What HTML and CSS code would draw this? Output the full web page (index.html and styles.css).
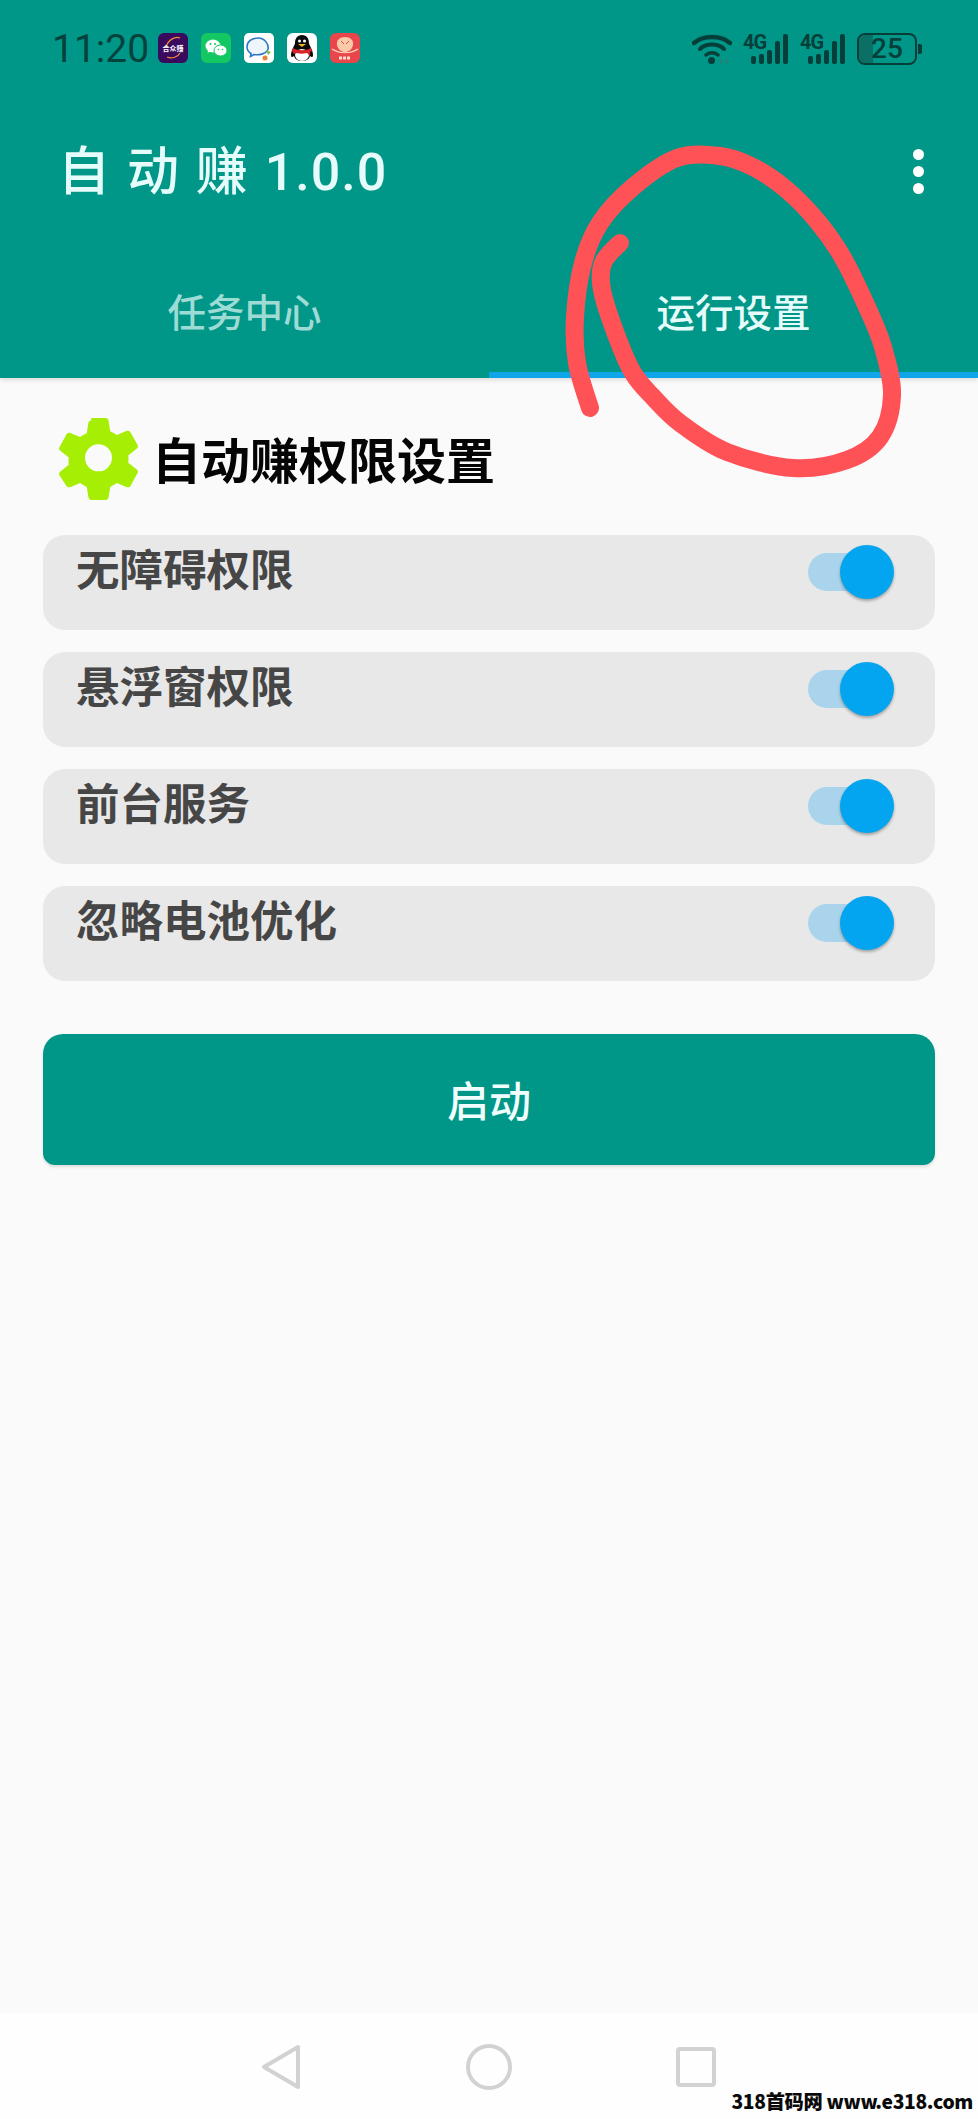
FILE: index.html
```html
<!DOCTYPE html>
<html lang="zh-CN">
<head>
<meta charset="utf-8">
<title>自动赚 1.0.0</title>
<link rel="stylesheet" href="styles.css">
</head>
<body>
<div class="phone">
  <header class="appbar">
    <div class="statusbar">
      <span class="clock">11:20</span>
      <div class="notifs">
        <svg class="notif" viewBox="0 0 30 30"><rect width="30" height="30" rx="6" fill="#3a0a5e"/><path d="M8 14C10 7 17 3 22 5" fill="none" stroke="#f08a3c" stroke-width="1.200"/><path d="M9 24C14 26 20 24 22 20" fill="none" stroke="#f08a3c" stroke-width="1.200"/><text class="notif-label" x="15" y="18" text-anchor="middle">合众赚</text></svg>
        <svg class="notif" viewBox="0 0 30 30"><rect width="30" height="30" rx="6" fill="#13c762"/><ellipse cx="12" cy="13" rx="7.500" ry="6.500" fill="#fff"/><path d="M7.500 17l-1 3 3.500-2z" fill="#fff"/><ellipse cx="19.500" cy="17.500" rx="6.500" ry="5.500" fill="#fff" stroke="#13c762"/><circle cx="9.500" cy="11" r="1" fill="#13c762"/><circle cx="14" cy="11" r="1" fill="#13c762"/><circle cx="17.500" cy="16.500" r=".8" fill="#13c762"/><circle cx="21.500" cy="16.500" r=".8" fill="#13c762"/></svg>
        <svg class="notif" viewBox="0 0 30 30"><rect width="30" height="30" rx="5" fill="#fff"/><path d="M14 5C7 5 3 9 3 14c0 3 1.500 5 4 6.500l-.5 3 3.500-2c6 1 12-1 14-5 1-5-3-11.500-10-11.500z" fill="#eef6fb" stroke="#2b78c2" stroke-width="1.600"/><path d="M22 17l5 2-3 3z" fill="#7cc24a"/><circle cx="21" cy="25" r="2.500" fill="#e8843a"/></svg>
        <svg class="notif" viewBox="0 0 30 30"><rect width="30" height="30" rx="6" fill="#fff"/><path d="M15 2c-5 0-7 4-7 8 0 2-4 7-4 12 0 2 1 3 3 1 1 4 5 5 8 5s7-1 8-5c2 2 3 1 3-1 0-5-4-10-4-12 0-4-2-8-7-8z" fill="#0b0b0b"/><ellipse cx="15" cy="22" rx="7" ry="6" fill="#fff"/><path d="M6 15c5 3 13 3 18 0l1 3-2 1 0 4-3-3c-4 1-7 1-10 0l-3 1-2-3z" fill="#d9232b"/><path d="M11 11h8l-4 3z" fill="#f5b31c"/><circle cx="12.500" cy="8" r="1.500" fill="#fff"/><circle cx="17.500" cy="8" r="1.500" fill="#fff"/></svg>
        <svg class="notif" viewBox="0 0 30 30"><rect width="30" height="30" rx="6" fill="#e9464c"/><path d="M15 4c5 0 9 3 8 8-1 5-5 7-8 7s-7-2-8-7c-1-5 3-8 8-8z" fill="#f9c9a8"/><path d="M11 8l3 3M19 8l-3 3" stroke="#e9464c" fill="none"/><path d="M2 16c8 5 18 5 26 0" fill="none" stroke="#f9d9c4" stroke-width="1.200"/><path d="M9 25h12" stroke="#fbdccb" stroke-width="3" stroke-dasharray="3 1"/></svg>
      </div>
      <div class="indicators">
        <svg class="wifi" viewBox="0 0 40 30"><g fill="none" stroke="#063f3a" stroke-linecap="round"><path d="M2 9C11 1 29 1 38 9" stroke-width="4.500"/><path d="M8 15C14 9 26 9 32 15" stroke-width="4"/><path d="M14 21c3-3 9-3 12 0" stroke-width="3.500"/></g><circle cx="19.500" cy="26.500" r="3.500" fill="#063f3a"/><path d="M30 25l-3 2.500 3 2.500zM34 25l3 2.500-3 2.500z" fill="#2d7f75"/></svg>
        <div class="cell">
          <span class="gen">4G</span>
          <i class="bar b1"></i><i class="bar b2"></i><i class="bar b3"></i><i class="bar b4"></i><i class="bar b5"></i>
        </div>
        <div class="cell">
          <span class="gen">4G</span>
          <i class="bar b1"></i><i class="bar b2"></i><i class="bar b3"></i><i class="bar b4"></i><i class="bar b5"></i>
        </div>
        <div class="battery"><span class="level"></span><span class="percent">25</span></div>
        <i class="battery-nub"></i>
      </div>
    </div>
    <div class="titlebar">
      <h1 class="apptitle">自 动 赚 1.0.0</h1>
      <div class="overflow"><i></i><i></i><i></i></div>
    </div>
    <nav class="tabs">
      <div class="tab">任务中心</div>
      <div class="tab tab-active">运行设置</div>
    </nav>
  </header>

  <main class="content">
    <div class="heading">
      <svg class="gear" viewBox="0 0 24 24"><path fill-rule="evenodd" d="M9.900 .6h4.200c.4 0 .7.300.8.700l.5 3.100c.7.300 1.300.7 1.900 1.100l2.900-1.200c.4-.1.800 0 1 .3l2.100 3.800c.2.300.1.800-.2 1l-2.500 2c.1.700.1 1.400 0 2.100l2.500 2c.3.200.4.700.2 1l-2.100 3.800c-.2.300-.6.400-1 .3l-2.900-1.200c-.6.400-1.200.8-1.900 1.100l-.5 3.100c-.1.400-.4.700-.8.700H9.900c-.4 0-.7-.3-.8-.7l-.5-3.100c-.7-.3-1.300-.7-1.900-1.100l-2.900 1.200c-.4.100-.8 0-1-.3L.7 17.100c-.2-.3-.1-.8.200-1l2.500-2c-.1-.7-.1-1.400 0-2.100l-2.500-2c-.3-.2-.4-.7-.2-1l2.100-3.800c.2-.3.600-.4 1-.3l2.900 1.200c.6-.4 1.200-.8 1.900-1.100l.5-3.100c.1-.4.400-.7.800-.7zM12 8.200a3.900 3.900 0 1 0 0 7.800 3.900 3.900 0 0 0 0-7.800z"/></svg>
      <h2 class="heading-text">自动赚权限设置</h2>
    </div>
    <ul class="perms">
      <li class="perm"><span class="perm-name">无障碍权限</span><span class="switch"><i class="thumb"></i></span></li>
      <li class="perm"><span class="perm-name">悬浮窗权限</span><span class="switch"><i class="thumb"></i></span></li>
      <li class="perm"><span class="perm-name">前台服务</span><span class="switch"><i class="thumb"></i></span></li>
      <li class="perm"><span class="perm-name">忽略电池优化</span><span class="switch"><i class="thumb"></i></span></li>
    </ul>
    <button class="start">启动</button>
  </main>

  <footer class="navbar">
    <svg class="navicon" viewBox="0 0 40 46"><path d="M37 3v40L3 23z" fill="none" stroke="#d2d2d2" stroke-width="4" stroke-linejoin="round"/></svg>
    <svg class="navicon" viewBox="0 0 46 46"><circle cx="23" cy="23" r="21" fill="none" stroke="#d2d2d2" stroke-width="4"/></svg>
    <svg class="navicon" viewBox="0 0 40 40"><rect x="2" y="2" width="36" height="36" rx="2" fill="none" stroke="#d2d2d2" stroke-width="4"/></svg>
  </footer>
  <span class="watermark">318首码网 www.e318.com</span>

  <!-- hand-drawn circle around the settings tab -->
  <svg class="scribble" viewBox="0 0 978 2119"><path d="M620 243C617 246 606 255 603 263S599.700 277.700 602 290 611.800 323.200 617 337 627 363 633 373 645.200 388.700 653 397 667.700 413.800 680 423 708.200 444.500 727 452 773 466.700 793 468 832.500 465.200 847 460 872.500 447.800 880 437 891.500 410 892 395 887.200 361.700 883 347 873.700 321.800 867 307 851.200 272.200 843 258 827.300 233.300 818 222 797.800 199.200 787 190 764.200 172.700 753 167 732.700 157.500 720 156 691.500 152.800 677 158 645.800 176.200 633 187 608.300 210.300 600 223 587.200 247.300 583 263 576 300.300 575 317 574.500 347.800 577 363 588 401 590 408" fill="none" stroke="#ff5257" stroke-width="18" stroke-linecap="round" stroke-linejoin="round"/></svg>
</div>
</body>
</html>
```
FILE: styles.css
```css
* { box-sizing: border-box; }

html, body {
  margin: 0;
  padding: 0;
}

body {
  background: #fafafa;
  font-family: "Noto Sans CJK SC", "Noto Sans", sans-serif;
}

.phone {
  position: relative;
  width: 978px;
  height: 2119px;
  display: flex;
  flex-direction: column;
  overflow: hidden;
}

/* App bar: status row, title row, tabs */
.appbar {
  flex: none;
  height: 378px;
  background: #009688;
  display: flex;
  flex-direction: column;
  box-shadow: 0 2px 5px rgba(0, 0, 0, .12);
  position: relative;
}

.statusbar {
  height: 136px;
  padding: 32px 56px 0 52px;
  display: flex;
  align-items: flex-start;
}

.clock {
  font-family: Roboto, sans-serif;
  font-size: 39px;
  line-height: 34px;
  color: #06423c;
  width: 106px;
}

.notifs {
  display: flex;
  gap: 13px;
  margin-top: 1px;
}

.notif {
  width: 30px;
  height: 30px;
  display: block;
}

.notif-label {
  font-size: 7px;
  font-weight: 700;
  fill: #fff;
}

.indicators {
  margin-left: auto;
  display: flex;
  align-items: center;
  height: 33px;
}

.wifi {
  width: 40px;
  height: 30px;
  margin-right: 11px;
}

.cell {
  position: relative;
  width: 45px;
  height: 30px;
  margin-right: 12px;
  display: flex;
  align-items: flex-end;
  justify-content: flex-end;
  gap: 3px;
}

.gen {
  position: absolute;
  left: 0;
  top: -2px;
  font-family: "Roboto", sans-serif;
  font-weight: 700;
  font-size: 20px;
  line-height: 20px;
  letter-spacing: -1px;
  color: #063f3a;
}

.bar {
  display: block;
  width: 5px;
  background: #063f3a;
  border-radius: 2px;
}

.b1 { height: 8px; }
.b2 { height: 10px; }
.b3 { height: 14px; }
.b4 { height: 23px; }
.b5 { height: 30px; }

.battery {
  position: relative;
  width: 60px;
  height: 32px;
  border: 2px solid #063f3a;
  border-radius: 8px;
  display: flex;
  align-items: center;
  justify-content: center;
  overflow: hidden;
}

.level {
  position: absolute;
  left: 0;
  top: 0;
  bottom: 0;
  width: 25%;
  background: #0b6f66;
}

.percent {
  position: relative;
  font-family: Roboto, sans-serif;
  font-size: 28px;
  font-weight: 500;
  line-height: 28px;
  color: #063f3a;
}

.battery-nub {
  display: block;
  width: 4px;
  height: 10px;
  margin-left: 1px;
  background: #063f3a;
  border-radius: 0 2px 2px 0;
}

.titlebar {
  height: 74px;
  padding: 0 54px 0 58px;
  display: flex;
  align-items: center;
  justify-content: space-between;
}

.apptitle {
  margin: 0;
  font-family: Roboto, "Noto Sans CJK SC", sans-serif;
  font-weight: 500;
  font-size: 52px;
  line-height: 60px;
  letter-spacing: 1px;
  word-spacing: 2px;
  color: #e6fcfa;
}

.overflow {
  display: flex;
  flex-direction: column;
  gap: 6px;
  margin-top: -4px;
}

.overflow i {
  display: block;
  width: 11px;
  height: 11px;
  border-radius: 50%;
  background: #fff;
}

.tabs {
  height: 132px;
  margin-top: auto;
  display: flex;
}

.tab {
  flex: 1;
  display: flex;
  align-items: center;
  justify-content: center;
  font-size: 38.500px;
  font-weight: 500;
  padding-bottom: 4px;
  color: #9edbd4;
}

.tab-active {
  color: #e6fcfa;
  box-shadow: inset 0 -6px 0 #0ea5e9;
}

/* Permissions and the start button */
.content {
  flex: 1;
  padding: 37px 43px 0;
}

.heading {
  display: flex;
  align-items: center;
  gap: 12px;
  height: 85px;
  padding-left: 14px;
}

.gear {
  width: 83px;
  height: 85px;
  fill: #a6ef05;
  flex: none;
}

.heading-text {
  margin: 0;
  font-size: 49px;
  font-weight: 700;
  line-height: 60px;
  color: #050505;
}

.perms {
  list-style: none;
  margin: 35px 0 0;
  padding: 0;
  display: flex;
  flex-direction: column;
  gap: 22px;
}

.perm {
  height: 95px;
  background: #e8e8e8;
  border-radius: 22px;
  padding: 7px 41px 0 33px;
  display: flex;
  align-items: flex-start;
  justify-content: space-between;
}

.perm-name {
  font-size: 43.500px;
  font-weight: 700;
  line-height: 52px;
  color: #464646;
}

.switch {
  position: relative;
  display: block;
  width: 86px;
  height: 38px;
  margin-top: 11px;
  border-radius: 19px 0 0 19px;
  background: linear-gradient(to right, #a9d4eb 60%, transparent 60%);
}

.thumb {
  position: absolute;
  right: 0;
  top: -8px;
  width: 54px;
  height: 54px;
  border-radius: 50%;
  background: #03a5f0;
  box-shadow: 0 2px 3px rgba(0, 0, 0, .3);
}

.start {
  display: block;
  width: 100%;
  height: 131px;
  margin-top: 53px;
  border: 0;
  border-radius: 20px 20px 12px 12px;
  background: #009688;
  color: #f0fffd;
  font-family: inherit;
  font-size: 42px;
  font-weight: 500;
  padding-bottom: 4px;
  box-shadow: 0 2px 3px rgba(0, 0, 0, .12);
}

/* System navigation */
.navbar {
  flex: none;
  height: 106px;
  background: #fefefe;
  padding: 31px 262px 0 261px;
  display: flex;
  align-items: flex-start;
  justify-content: space-between;
}

.navicon {
  width: 40px;
  height: 46px;
}

.navicon:nth-child(2) { width: 46px; }
.navicon:nth-child(3) { height: 40px; margin-top: 3px; }

.watermark {
  position: absolute;
  right: 5px;
  bottom: 6px;
  font-family: "Noto Sans CJK SC", sans-serif;
  font-size: 19.300px;
  font-weight: 900;
  letter-spacing: -.35px;
  line-height: 24px;
  color: #0a0a0a;
}

.scribble {
  position: absolute;
  left: 0;
  top: 0;
  width: 978px;
  height: 2119px;
  pointer-events: none;
}
```
